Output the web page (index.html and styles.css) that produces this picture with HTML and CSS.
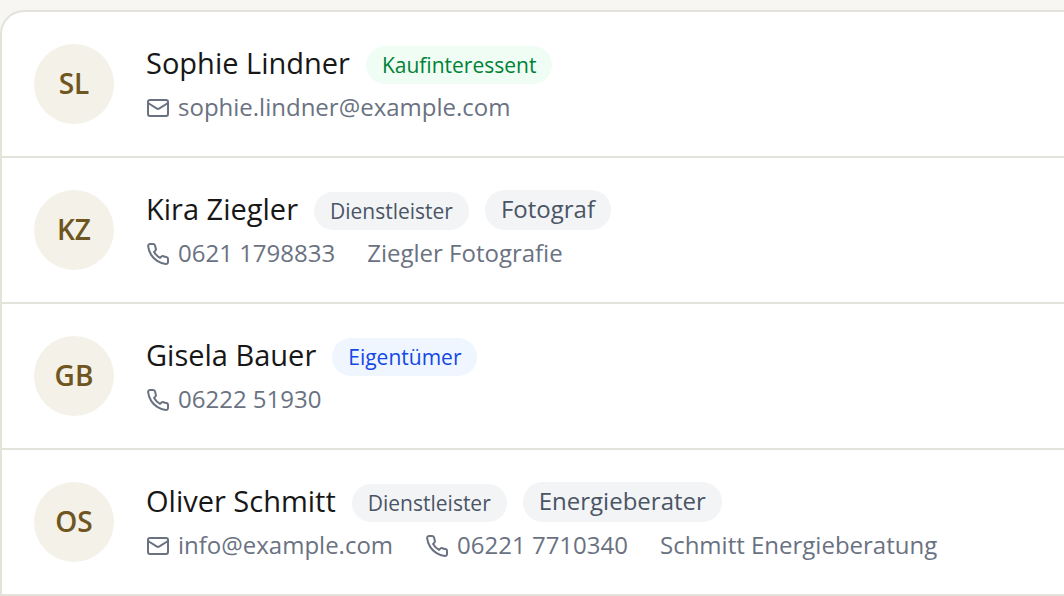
FILE: index.html
```html
<!DOCTYPE html>
<html lang="de">
<head>
  <meta charset="UTF-8">
  <meta name="viewport" content="width=device-width, initial-scale=1.0">
  <title>Kontakte</title>
  <link rel="stylesheet" href="styles.css">
</head>
<body>
  <!-- Icon sprite -->
  <svg class="sprite" aria-hidden="true">
    <symbol id="mail" viewBox="0 0 24 24">
      <rect x="2" y="4" width="20" height="16" rx="2"/>
      <path d="m22 7-8.97 5.7a1.94 1.94 0 0 1-2.06 0L2 7"/>
    </symbol>
    <symbol id="phone" viewBox="0 0 24 24">
      <path d="M22 16.92v3a2 2 0 0 1-2.18 2 19.79 19.79 0 0 1-8.63-3.07 19.5 19.5 0 0 1-6-6 19.79 19.79 0 0 1-3.07-8.67A2 2 0 0 1 4.11 2h3a2 2 0 0 1 2 1.72 12.84 12.84 0 0 0 .7 2.81 2 2 0 0 1-.45 2.11L8.09 9.91a16 16 0 0 0 6 6l1.27-1.27a2 2 0 0 1 2.11-.45 12.84 12.84 0 0 0 2.81.7A2 2 0 0 1 22 16.92z"/>
    </symbol>
  </svg>

  <ul class="contact-list">
    <li class="contact">
      <div class="avatar">SL</div>
      <div class="contact-info">
        <div class="contact-head">
          <span class="contact-name">Sophie Lindner</span>
          <span class="badge buyer">Kaufinteressent</span>
        </div>
        <div class="contact-meta">
          <span class="meta-item"><svg class="icon"><use href="#mail"/></svg>sophie.lindner@example.com</span>
        </div>
      </div>
    </li>

    <li class="contact">
      <div class="avatar">KZ</div>
      <div class="contact-info">
        <div class="contact-head">
          <span class="contact-name">Kira Ziegler</span>
          <span class="badge service">Dienstleister</span>
          <span class="tag">Fotograf</span>
        </div>
        <div class="contact-meta">
          <span class="meta-item"><svg class="icon"><use href="#phone"/></svg>0621 1798833</span>
          <span class="meta-item">Ziegler Fotografie</span>
        </div>
      </div>
    </li>

    <li class="contact">
      <div class="avatar">GB</div>
      <div class="contact-info">
        <div class="contact-head">
          <span class="contact-name">Gisela Bauer</span>
          <span class="badge owner">Eigentümer</span>
        </div>
        <div class="contact-meta">
          <span class="meta-item"><svg class="icon"><use href="#phone"/></svg>06222 51930</span>
        </div>
      </div>
    </li>

    <li class="contact">
      <div class="avatar">OS</div>
      <div class="contact-info">
        <div class="contact-head">
          <span class="contact-name">Oliver Schmitt</span>
          <span class="badge service">Dienstleister</span>
          <span class="tag">Energieberater</span>
        </div>
        <div class="contact-meta">
          <span class="meta-item"><svg class="icon"><use href="#mail"/></svg>info@example.com</span>
          <span class="meta-item"><svg class="icon"><use href="#phone"/></svg>06221 7710340</span>
          <span class="meta-item">Schmitt Energieberatung</span>
        </div>
      </div>
    </li>
  </ul>
</body>
</html>
```

FILE: styles.css
```css
/* General reset */
* {
  margin: 0;
  padding: 0;
  box-sizing: border-box;
}

body {
  font-family: "Open Sans", "Noto Sans", sans-serif;
  background: #f7f6f2;
  color: #171717;
  padding-top: 10px;
}

.sprite {
  display: none;
}

.contact-list {
  list-style: none;
  background: #fff;
  border: 2px solid #e3e3dc;
  border-right: none;
  border-radius: 24px 0 0 0;
}

.contact {
  display: flex;
  align-items: flex-start;
  gap: 32px;
  padding: 32px;
}

.contact + .contact {
  border-top: 2px solid #e3e3dc;
}

.avatar {
  display: flex;
  align-items: center;
  justify-content: center;
  flex-shrink: 0;
  width: 80px;
  height: 80px;
  padding-bottom: 2px;
  border-radius: 50%;
  background: #f3f1e8;
  color: #6f5520;
  font-size: 28px;
  font-weight: 600;
}

.contact-head {
  display: flex;
  align-items: flex-end;
  gap: 16px;
  height: 40px;
}

.contact-name {
  align-self: flex-start;
  font-size: 29px;
  font-weight: 500;
  line-height: 38px;
}

.badge,
.tag {
  border-radius: 20px;
  line-height: 30px;
}

.badge {
  padding: 4px 16px;
  font-size: 21px;
  font-weight: 500;
}

.tag {
  padding: 4px 16px 6px;
  font-size: 24px;
}

.buyer {
  background: #f0fdf4;
  color: #008236;
}

.service,
.tag {
  background: #f3f4f6;
  color: #4a5565;
}

.owner {
  background: #eff6ff;
  color: #1447e6;
}

.contact-meta {
  display: flex;
  gap: 32px;
  margin-top: 8px;
  font-size: 24px;
  line-height: 30px;
  color: #6a7282;
}

.meta-item {
  display: flex;
  align-items: center;
  gap: 8px;
}

.icon {
  width: 24px;
  height: 24px;
  margin-top: 2px;
  fill: none;
  stroke: currentColor;
  stroke-width: 2;
  stroke-linecap: round;
  stroke-linejoin: round;
}
```
